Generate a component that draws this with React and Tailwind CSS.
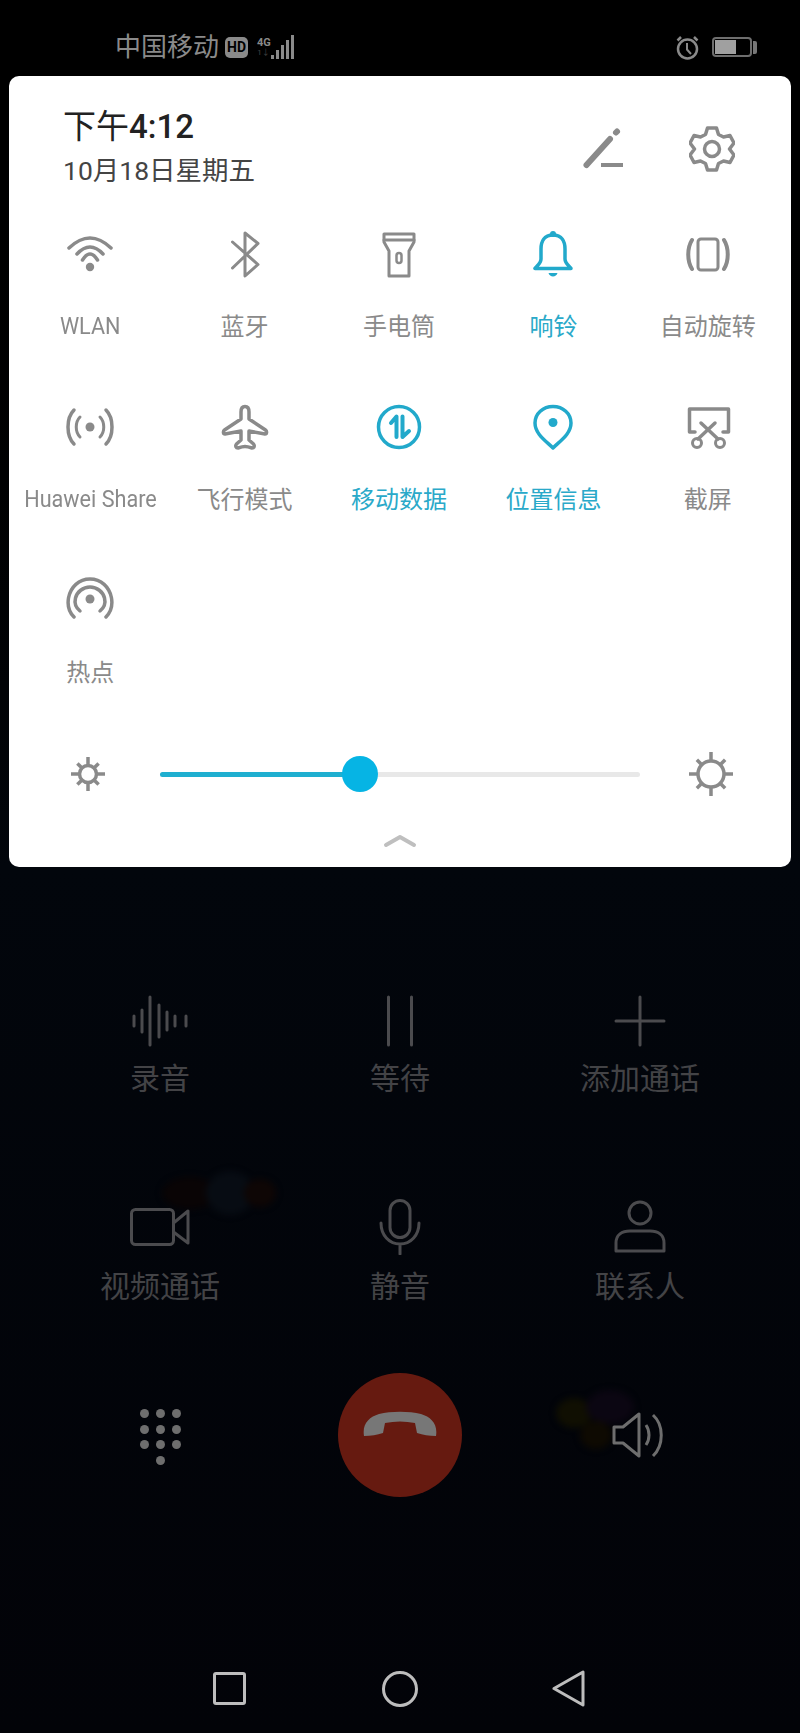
import React from 'react';

const G = '#8a8a8a';
const T = '#22a9cb';

function Ico({ children, c = G, w = 48, h = 48, sw = 3 }) {
  return (
    <svg className="shrink-0" width={w} height={h} viewBox={`0 0 ${w} ${h}`} fill="none" stroke={c} strokeWidth={sw} strokeLinecap="round" strokeLinejoin="round">
      {children}
    </svg>
  );
}

const Wifi = () => (
  <Ico sw={3.5}>
    <path d="M3 18Q24 -2 45 18" />
    <path d="M11 24Q24 10 37 24" />
    <path d="M16.5 30Q24 18 31.5 30" />
    <circle cx="24" cy="37" r="4.2" fill={G} stroke="none" />
  </Ico>
);
const Bluetooth = () => (
  <Ico>
    <path d="M11.5 12L37 34.5L24 46V3L37 13.5L11.5 38" />
  </Ico>
);
const Flashlight = () => (
  <Ico>
    <path d="M9 4H39V12L34 21V46H14V21L9 12Z" />
    <path d="M9 10H39" />
    <rect x="21.5" y="23" width="5" height="10" rx="2.5" strokeWidth="2.5" />
  </Ico>
);
const Bell = () => (
  <Ico c={T} sw={3.5}>
    <path d="M24 5C15 5 12 12 12 19V29C12 33 9 35 6 38.5H42C39 35 36 33 36 29V19C36 12 33 5 24 5Z" />
    <circle cx="24" cy="4" r="3" fill={T} stroke="none" />
    <path d="M19.5 43H28.5C27.5 47.5 20.5 47.5 19.5 43Z" fill={T} stroke="none" />
  </Ico>
);
const Rotate = () => (
  <Ico>
    <rect x="14" y="9" width="20" height="31" rx="3" />
    <path d="M8 10C3 18 3 31 8 39" strokeWidth="4" />
    <path d="M40 10C45 18 45 31 40 39" strokeWidth="4" />
  </Ico>
);
const Share = () => (
  <Ico>
    <circle cx="24" cy="24" r="4.5" fill={G} stroke="none" />
    <path d="M14 14C9 19 9 29 14 34" />
    <path d="M34 14C39 19 39 29 34 34" />
    <path d="M8 7C0 15 0 33 8 41" strokeWidth="3.5" />
    <path d="M40 7C48 15 48 33 40 41" strokeWidth="3.5" />
  </Ico>
);
const Plane = () => (
  <Ico sw={3.5}>
    <path d="M24 3.5C21 3.5 20 6 20 9V16L3.5 27C2 28 2 31 4 31L20 28V37L15.5 41C14 43 15 45 17 45C20 44 22 43.5 24 43.5C26 43.5 28 44 31 45C33 45 34 43 32.5 41L28 37V28L44 31C46 31 46 28 44.5 27L28 16V9C28 6 27 3.5 24 3.5Z" />
  </Ico>
);
const MobileData = () => (
  <Ico c={T} sw={3.5}>
    <circle cx="24" cy="24" r="20.5" />
    <path d="M16 20L21.5 13.5V34" strokeWidth="4" />
    <path d="M27.5 13.5V34L34 28" strokeWidth="4" />
  </Ico>
);
const Pin = () => (
  <Ico c={T} sw={3.5}>
    <path d="M24 45C17 38 6 31 6 20C6 10.5 14 3.5 24 3.5C34 3.5 42 10.5 42 20C42 31 31 38 24 45Z" />
    <circle cx="24" cy="19.5" r="4.5" fill={T} stroke="none" />
  </Ico>
);
const Screenshot = () => (
  <Ico sw={3.5}>
    <path d="M11 29H5.5V6H44.5V29H39" />
    <path d="M17 20L34 36" />
    <path d="M31 20L14 36" />
    <circle cx="13" cy="40" r="4.5" strokeWidth="3" />
    <circle cx="36" cy="40" r="4.5" strokeWidth="3" />
  </Ico>
);
const Hotspot = () => (
  <Ico sw={3.5}>
    <circle cx="24" cy="23" r="4.5" fill={G} stroke="none" />
    <path d="M14 35C9 31 8.5 26 9.5 22C11 16 17 11 24 11C31 11 37 16 38.5 22C39.5 26 39 31 34 35" />
    <path d="M8 41C2 35 1.5 28 2.5 22C4.5 11 13 3 24 3C35 3 43.5 11 45.5 22C46.5 28 46 35 40 41" />
  </Ico>
);

const tiles = [
  { label: 'WLAN', Icon: Wifi, latin: true },
  { label: '蓝牙', Icon: Bluetooth },
  { label: '手电筒', Icon: Flashlight },
  { label: '响铃', Icon: Bell, on: true },
  { label: '自动旋转', Icon: Rotate },
  { label: 'Huawei Share', Icon: Share, latin: true },
  { label: '飞行模式', Icon: Plane },
  { label: '移动数据', Icon: MobileData, on: true },
  { label: '位置信息', Icon: Pin, on: true },
  { label: '截屏', Icon: Screenshot },
  { label: '热点', Icon: Hotspot },
];

function Sun({ size, r, outer, sw = 3.5 }) {
  const c = size / 2;
  const rays = [0, 45, 90, 135, 180, 225, 270, 315];
  return (
    <svg width={size} height={size} viewBox={`0 0 ${size} ${size}`} fill="none" stroke={G} strokeWidth={sw}>
      <circle cx={c} cy={c} r={r} />
      {rays.map((a) => (
        <line
          key={a}
          x1={c + r * Math.cos((a * Math.PI) / 180)}
          y1={c + r * Math.sin((a * Math.PI) / 180)}
          x2={c + (a % 90 ? outer - 2 : outer) * Math.cos((a * Math.PI) / 180)}
          y2={c + (a % 90 ? outer - 2 : outer) * Math.sin((a * Math.PI) / 180)}
        />
      ))}
    </svg>
  );
}

const D = '#4b4b4e';

const row1 = [
  {
    label: '录音',
    icon: (
      <svg width="60" height="52" viewBox="0 0 60 52" fill="none" stroke={D} strokeWidth="3" strokeLinecap="round">
        <path d="M4 21V31M12 15V37M20 2V50M29 10V42M37 17V35M45 21V31M56 21V31" />
      </svg>
    ),
  },
  {
    label: '等待',
    icon: (
      <svg width="60" height="52" viewBox="0 0 60 52" fill="none" stroke={D} strokeWidth="3" strokeLinecap="round">
        <path d="M18.5 2V50M41.5 2V50" />
      </svg>
    ),
  },
  {
    label: '添加通话',
    icon: (
      <svg width="60" height="52" viewBox="0 0 60 52" fill="none" stroke={D} strokeWidth="3" strokeLinecap="round">
        <path d="M30 2V50M6 26H54" />
      </svg>
    ),
  },
];

const row2 = [
  {
    label: '视频通话',
    icon: (
      <svg width="60" height="56" viewBox="0 0 60 56" fill="none" stroke={D} strokeWidth="3" strokeLinejoin="round">
        <rect x="1.5" y="10.5" width="42" height="35" rx="4" />
        <path d="M43.5 24L58 12V44L43.5 33" />
      </svg>
    ),
  },
  {
    label: '静音',
    icon: (
      <svg width="60" height="56" viewBox="0 0 60 56" fill="none" stroke={D} strokeWidth="3" strokeLinecap="round">
        <rect x="20" y="1.5" width="20" height="37" rx="10" />
        <path d="M11 24C11 36 19 45 30 45C41 45 49 36 49 24M30 45V55" />
      </svg>
    ),
  },
  {
    label: '联系人',
    icon: (
      <svg width="60" height="56" viewBox="0 0 60 56" fill="none" stroke={D} strokeWidth="3" strokeLinejoin="round">
        <circle cx="30" cy="14" r="11" />
        <path d="M6 52V44C6 36 12 32 20 32H40C48 32 54 36 54 44V52Z" />
      </svg>
    ),
  },
];

function Control({ icon, label }) {
  return (
    <div className="flex flex-col items-center">
      {icon}
      <div className="mt-[12px] text-[30px] leading-[40px] text-[#434346]">{label}</div>
    </div>
  );
}

export default function App() {
  return (
    <div className="relative w-[800px] h-[1733px] overflow-hidden flex flex-col bg-linear-to-b from-black via-[#02060c] to-[#020308] font-['Roboto','Noto_Sans_CJK_SC',sans-serif]">
      {/* faint fish from the wallpaper */}
      <svg className="absolute left-[155px] top-[1165px] blur-[3px]" width="130" height="60" viewBox="0 0 130 60">
        <ellipse cx="35" cy="28" rx="28" ry="16" fill="#090405" />
        <ellipse cx="75" cy="28" rx="24" ry="22" fill="#070c13" />
        <ellipse cx="105" cy="28" rx="16" ry="14" fill="#0e0605" />
      </svg>
      <svg className="absolute left-[550px] top-[1385px] blur-[3px]" width="110" height="70" viewBox="0 0 110 70">
        <ellipse cx="24" cy="28" rx="18" ry="15" fill="#100f02" />
        <ellipse cx="60" cy="22" rx="24" ry="17" fill="#0b0612" />
        <ellipse cx="46" cy="50" rx="16" ry="14" fill="#0e0a02" />
      </svg>

      {/* status bar */}
      <div className="relative h-[76px] shrink-0 flex items-center justify-between pl-[115px] pr-[43px] pt-[18px]">
        <div className="flex items-center text-[#8a8a8a]">
          <span className="text-[26px] leading-none">中国移动</span>
          <span className="ml-[6px] w-[23px] h-[21px] rounded-[5px] bg-[#8a8a8a] flex items-center justify-center text-black text-[14px] leading-none font-bold">HD</span>
          <div className="ml-[9px] flex flex-col w-[13px] text-center leading-none -mt-[1px]">
            <span className="text-[11px] font-bold">4G</span>
            <span className="text-[8px] text-[#444] mt-[1px]">1↓</span>
          </div>
          <div className="ml-[1px] flex items-end gap-[2px] h-[24px]">
            <div className="w-[3px] h-[4px] bg-[#8a8a8a]" />
            <div className="w-[3px] h-[9px] bg-[#8a8a8a]" />
            <div className="w-[3px] h-[14px] bg-[#8a8a8a]" />
            <div className="w-[3px] h-[19px] bg-[#8a8a8a]" />
            <div className="w-[3px] h-[24px] bg-[#8a8a8a]" />
          </div>
        </div>
        <div className="flex items-center gap-[13px]">
          <svg width="23" height="25" viewBox="0 0 23 25" fill="none" stroke="#8a8a8a" strokeWidth="2.5">
            <circle cx="11.5" cy="14" r="9.5" />
            <path d="M11 8V14.5L15 19" strokeWidth="2" />
            <path d="M1.5 5.5L5 2M21.5 5.5L18 2" />
          </svg>
          <div className="flex items-center gap-[1px]">
            <div className="w-[40px] h-[20px] rounded-[4px] border-2 border-[#6e6e6e] p-[1px]">
              <div className="w-[21px] h-full bg-[#a0a0a0]" />
            </div>
            <div className="w-[4px] h-[13px] bg-[#777] rounded-r-[2px]" />
          </div>
        </div>
      </div>

      {/* quick settings panel */}
      <div className="relative mx-[9px] h-[791px] shrink-0 rounded-[10px] bg-white flex flex-col">
        <div className="h-[154px] shrink-0 pl-[54px] pr-[56px] flex justify-between">
          <div className="pt-[31px]">
            <div className="text-[33px] leading-[40px] text-[#222]">
              下午<span className="font-medium">4:12</span>
            </div>
            <div className="mt-[6px] text-[26.5px] leading-[36px] text-[#444]">10月18日星期五</div>
          </div>
          <div className="flex items-start gap-[63px] pt-[50px]">
            <svg className="mt-[1px]" width="44" height="44" viewBox="0 0 44 44" fill="none" stroke={G} strokeLinecap="round">
              <path d="M4.5 38L28 12" strokeWidth="6" />
              <path d="M34 5.5L35 4.5" strokeWidth="6" />
              <path d="M19 38H41" strokeWidth="4" strokeLinecap="butt" />
            </svg>
            <svg width="46" height="46" viewBox="0 0 46 46" fill="none" stroke={G} strokeWidth="3.5" strokeLinejoin="round">
              <path d="M18.5 2H27.5L29.5 8.5L34.5 11L41 9.5L45 17L40.5 23L45 29L41 36.5L34.5 35L29.5 37.5L27.5 44H18.5L16.5 37.5L11.5 35L5 36.5L1 29L5.5 23L1 17L5 9.5L11.5 11L16.5 8.5Z" />
              <circle cx="23" cy="23" r="7.5" />
            </svg>
          </div>
        </div>

        <div className="grid grid-cols-5 gap-y-[60px] pl-[4px] pr-[6px]">
          {tiles.map(({ label, Icon, on, latin }) => (
            <div key={label} className="flex flex-col items-center h-[113px]">
              <Icon />
              <div className={`mt-[33px] leading-[32px] whitespace-nowrap ${latin ? 'text-[23px] scale-x-[0.94]' : 'text-[24px]'} ${on ? 'text-[#2aa9c9]' : 'text-[#8a8a8a]'}`}>
                {label}
              </div>
            </div>
          ))}
        </div>

        <div className="mt-[61px] h-[48px] flex items-center pl-[55px]">
          <Sun size={48} r={8.5} outer={17} />
          <div className="relative ml-[48px] w-[480px] h-[5px] rounded-full bg-[#e8e8e8]">
            <div className="w-[200px] h-full rounded-full bg-[#1fafd0]" />
            <div className="absolute left-[182px] -top-[16px] w-[36px] h-[36px] rounded-full bg-[#06b4e4]" />
          </div>
          <div className="ml-[47px]">
            <Sun size={48} r={13} outer={22} />
          </div>
        </div>

        <div className="mt-[36px] flex justify-center">
          <svg width="34" height="14" viewBox="0 0 34 14" fill="none" stroke="#bfbfbf" strokeWidth="4" strokeLinecap="round" strokeLinejoin="round">
            <path d="M3 11L17 3L31 11" />
          </svg>
        </div>
      </div>

      {/* in-call controls */}
      <div className="relative grid grid-cols-3 px-[40px] pt-[128px]">
        {row1.map((c) => (
          <Control key={c.label} icon={c.icon} label={c.label} />
        ))}
      </div>
      <div className="relative grid grid-cols-3 px-[40px] mt-[100px]">
        {row2.map((c) => (
          <Control key={c.label} icon={c.icon} label={c.label} />
        ))}
      </div>

      <div className="relative mt-[66px] grid grid-cols-3 px-[40px] h-[124px] items-center">
        <div className="flex justify-center pt-[4px]">
          <div className="grid grid-cols-3 gap-x-[7px] gap-y-[6.5px]">
            {[1, 2, 3, 4, 5, 6, 7, 8, 9].map((n) => (
              <div key={n} className="w-[9px] h-[9px] rounded-full bg-[#6e6e6e]" />
            ))}
            <div className="col-start-2 w-[9px] h-[9px] rounded-full bg-[#6e6e6e]" />
          </div>
        </div>
        <div className="flex justify-center">
          <div className="w-[124px] h-[124px] rounded-full bg-[#661a10] flex items-center justify-center pb-[22px]">
            <svg width="74" height="26" viewBox="0 0 74 26" fill="#777">
              <path d="M1 25C-1 13 6 6 16 3C28 0 46 0 58 3C68 6 75 13 73 25C66 25 60 24 54 22L52 12C42 10 32 10 22 12L20 22C14 24 8 25 1 25Z" />
            </svg>
          </div>
        </div>
        <div className="flex justify-center">
          <svg width="56" height="46" viewBox="0 0 56 46" fill="none" stroke="#6e6e6e" strokeWidth="3" strokeLinejoin="round">
            <path d="M2 15H11L27 2V44L11 31H2Z" />
            <path d="M34 13C38 19 38 27 34 33" />
            <path d="M41 3C52 13 52 33 41 44" />
          </svg>
        </div>
      </div>

      {/* nav bar */}
      <div className="relative mt-[173px] flex items-center pl-[213px]">
        <div className="w-[33px] h-[33px] rounded-[3px] border-[3px] border-[#bdbdbd]" />
        <div className="ml-[136px] w-[36px] h-[36px] rounded-full border-[3px] border-[#bdbdbd]" />
        <svg className="ml-[134px]" width="33" height="37" viewBox="0 0 33 37" fill="none" stroke="#bdbdbd" strokeWidth="3" strokeLinejoin="round">
          <path d="M2 18.5L31 2V35Z" />
        </svg>
      </div>
    </div>
  );
}
